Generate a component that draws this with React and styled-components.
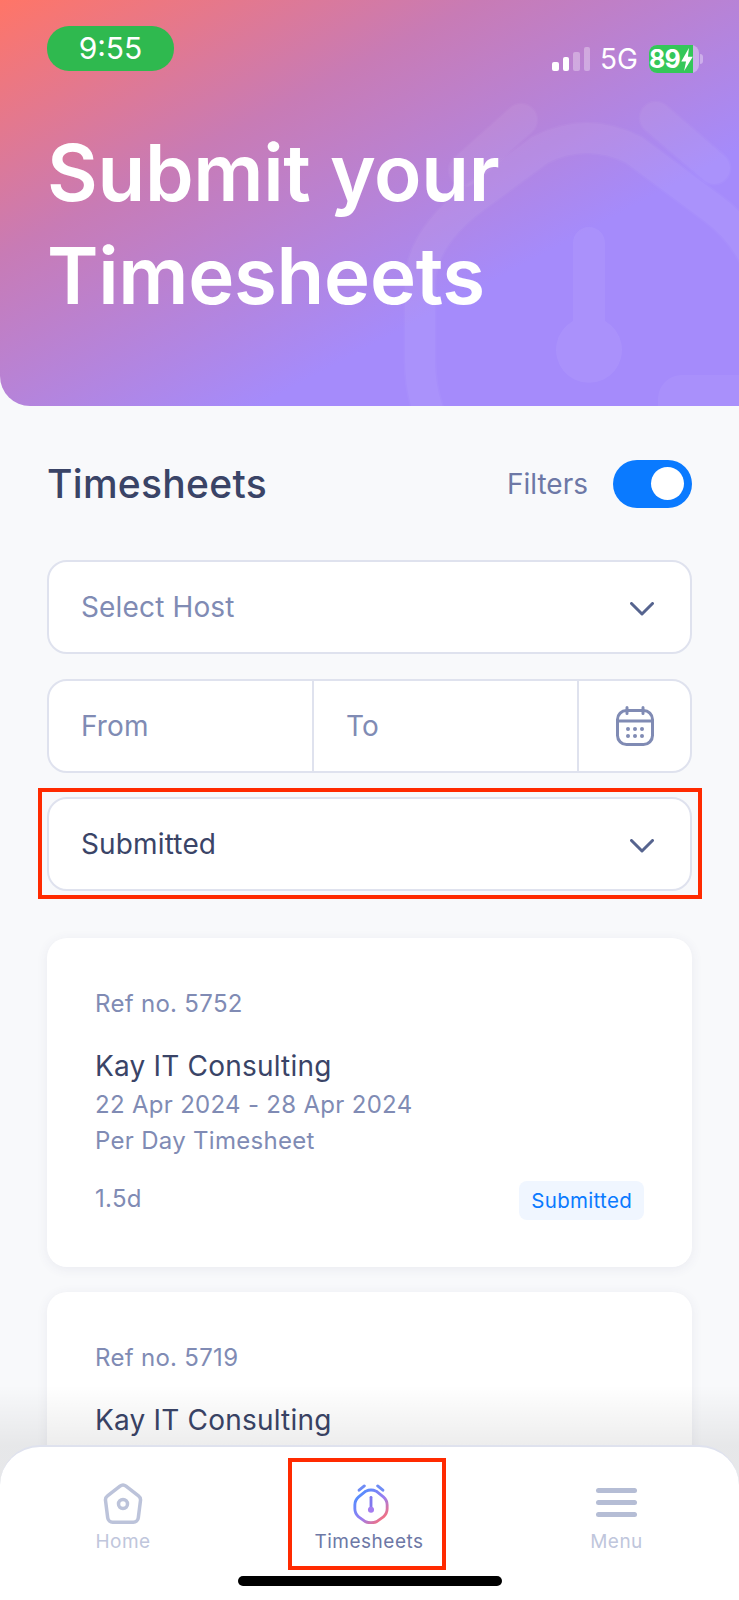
import React from "react";
import styled, { createGlobalStyle, css } from "styled-components";

const colors = {
  ink: "#3a4467",
  muted: "#808bb4",
  line: "#dfe2ee",
  blue: "#0a7aff",
  red: "#ff2a00",
  faded: "#c0c6dc",
};

const GlobalStyle = createGlobalStyle`
  html, body {
    margin: 0;
    padding: 0;
    background: #f8f9fb;
    font-family: Inter, "Liberation Sans", sans-serif;
  }
  * {
    box-sizing: border-box;
  }
`;

const Chevron = () => (
  <ChevronSvg viewBox="0 0 24 14" width="24" height="14" fill="none">
    <path d="M1.5 1.5 12 12 22.5 1.5" stroke="#56648f" strokeWidth="3" strokeLinecap="round" strokeLinejoin="round" />
  </ChevronSvg>
);

const CalendarIcon = () => (
  <svg viewBox="0 0 38 40" width="38" height="40" fill="none" stroke={colors.muted} strokeWidth="3" strokeLinecap="round">
    <rect x="1.5" y="4.5" width="35" height="34" rx="9" />
    <path d="M1.5 15h35M11 1.5v6M27 1.5v6" />
    <g fill={colors.muted} stroke="none">
      <circle cx="12" cy="23" r="2" />
      <circle cx="19" cy="23" r="2" />
      <circle cx="26" cy="23" r="2" />
      <circle cx="12" cy="30" r="2" />
      <circle cx="19" cy="30" r="2" />
      <circle cx="26" cy="30" r="2" />
    </g>
  </svg>
);

const bandPath =
  "M434 425Q420 395 420 360V285C420 250 442 222 476 197L540 150Q587 126 634 150L712 208C745 232 760 262 770 300";

const HeaderArt = () => (
  <ArtSvg viewBox="0 0 739 406" fill="none">
    <g stroke="#fff" strokeLinecap="round">
      <path d={bandPath} strokeOpacity="0.03" strokeWidth="33" strokeLinecap="butt" />
      <path d={bandPath} strokeOpacity="0.04" strokeWidth="30" strokeLinecap="butt" />
      <path d="M521 120 465 170M656 118 714 168" strokeOpacity="0.03" strokeWidth="35" />
      <path d="M521 120 465 170M656 118 714 168" strokeOpacity="0.035" strokeWidth="32" />
    </g>
    <path
      d="M573 243a16 16 0 0 1 32 0v78a33 33 0 1 1-32 0z"
      fill="#fff"
      fillOpacity="0.06"
    />
    <rect x="658" y="375" width="120" height="60" rx="24" fill="#fff" fillOpacity="0.05" />
  </ArtSvg>
);

const HomeIcon = () => (
  <svg viewBox="0 0 40 42" width="40" height="42" fill="none" stroke="#bcc3da" strokeWidth="3.5" strokeLinejoin="round">
    <path d="M17 3.2a5 5 0 0 1 6 0l12.5 9.6a5 5 0 0 1 2 4.6l-2.2 17.4a5 5 0 0 1-5 4.4H9.7a5 5 0 0 1-5-4.4L2.5 17.4a5 5 0 0 1 2-4.6z" />
    <circle cx="20" cy="21" r="4.5" />
  </svg>
);

const TimerIcon = () => (
  <TimerSvg viewBox="0 0 40 42" width="38" height="40" fill="none" strokeLinecap="round" strokeLinejoin="round">
    <defs>
      <linearGradient id="timerStroke" x1="0.1" y1="0.1" x2="0.9" y2="0.95">
        <stop offset="0" stopColor="#4f8dff" />
        <stop offset="0.55" stopColor="#9a7df0" />
        <stop offset="1" stopColor="#ff6f72" />
      </linearGradient>
    </defs>
    <path
      d="M14.5 7.5Q20 5 25.5 7.5L33 13.5Q37 17 37 22v4Q37 31 33 34.5L26 39.5Q20 42 14 39.5L7 34.5Q3 31 3 26v-4Q3 17 7 13.5z"
      stroke="url(#timerStroke)"
      strokeWidth="3"
    />
    <path d="M7.5 6.5 13 2M32.5 6.5 27 2" stroke="#6f8cf5" strokeWidth="3" />
    <path d="M20 14v12" stroke="#7f78ee" strokeWidth="3" />
    <circle cx="20" cy="27" r="3.2" fill="#a47cf0" />
  </TimerSvg>
);

const MenuIcon = () => (
  <MenuBars>
    <span />
    <span />
    <span />
  </MenuBars>
);

// the second card runs under the bottom nav, so only its top is known
const timesheets = [
  {
    ref: "Ref no. 5752",
    host: "Kay IT Consulting",
    period: "22 Apr 2024 - 28 Apr 2024",
    type: "Per Day Timesheet",
    amount: "1.5d",
    status: "Submitted",
  },
  {
    ref: "Ref no. 5719",
    host: "Kay IT Consulting",
  },
];

const App = () => {
  return (
    <Page>
      <GlobalStyle />
      <Hero>
        <HeaderArt />
        <StatusBar>
          <TimePill>9:55</TimePill>
          <StatusRight>
            <Signal>
              <SignalBar $h={9} $on />
              <SignalBar $h={14} $on />
              <SignalBar $h={19} />
              <SignalBar $h={24} />
            </Signal>
            <Network>5G</Network>
            <Battery>
              <BatteryFill>
                89
                <svg viewBox="0 0 12 24" width="12" height="23">
                  <path d="M8 0 0 14h5l-2 10 9-15H7z" fill="#fff" />
                </svg>
              </BatteryFill>
            </Battery>
          </StatusRight>
        </StatusBar>
        <HeroTitle>
          Submit your
          <br />
          Timesheets
        </HeroTitle>
      </Hero>

      <Content>
        <TitleRow>
          <SectionTitle>Timesheets</SectionTitle>
          <FilterToggle>
            <FilterLabel>Filters</FilterLabel>
            <Toggle>
              <Knob />
            </Toggle>
          </FilterToggle>
        </TitleRow>

        <Fields>
          <Field>
            <Placeholder>Select Host</Placeholder>
            <Chevron />
          </Field>
          <DateField>
            <DateCell>From</DateCell>
            <DateCell>To</DateCell>
            <IconCell>
              <CalendarIcon />
            </IconCell>
          </DateField>
          <Field $marked>
            <Value>Submitted</Value>
            <Chevron />
          </Field>
        </Fields>

        <CardList>
          {timesheets.map((item) => (
            <Card key={item.ref}>
              <RefNo>{item.ref}</RefNo>
              <Host>{item.host}</Host>
              {item.period && <Meta>{item.period}</Meta>}
              {item.type && <Meta>{item.type}</Meta>}
              {item.status && (
                <CardFooter>
                  <Amount>{item.amount}</Amount>
                  <Badge>{item.status}</Badge>
                </CardFooter>
              )}
            </Card>
          ))}
        </CardList>
      </Content>

      <Fade />
      <BottomNav>
        <Tabs>
          <Tab>
            <TabIcon>
              <HomeIcon />
            </TabIcon>
            <TabLabel>Home</TabLabel>
          </Tab>
          <Tab $marked>
            <TabIcon>
              <TimerIcon />
            </TabIcon>
            <TabLabel $active>Timesheets</TabLabel>
          </Tab>
          <Tab>
            <TabIcon>
              <MenuIcon />
            </TabIcon>
            <TabLabel>Menu</TabLabel>
          </Tab>
        </Tabs>
        <HomeIndicator />
      </BottomNav>
    </Page>
  );
};

const Page = styled.div`
  position: relative;
  width: 739px;
  height: 1600px;
  overflow: hidden;
  background: #f8f9fb;
`;

const Hero = styled.header`
  position: relative;
  height: 406px;
  padding: 26px 0 0 47px;
  overflow: hidden;
  border-radius: 0 0 0 30px;
  background: linear-gradient(152deg, #ff7567 0%, #c87bb5 32%, #a58bfb 68%, #a58bfb 100%);
`;

const ArtSvg = styled.svg`
  position: absolute;
  top: 0;
  left: 0;
  width: 739px;
  height: 406px;
`;

const StatusBar = styled.div`
  position: relative;
  display: flex;
  justify-content: space-between;
  align-items: flex-start;
  padding-right: 40px;
`;

const TimePill = styled.div`
  width: 127px;
  height: 45px;
  border-radius: 22px;
  background: #2fb94f;
  color: #fff;
  font-size: 30px;
  line-height: 45px;
  text-align: center;
`;

const StatusRight = styled.div`
  display: flex;
  align-items: flex-end;
  margin-top: 19px;
`;

const Signal = styled.div`
  display: flex;
  align-items: flex-end;
  gap: 4px;
  height: 25px;
  margin-bottom: 2px;
`;

const SignalBar = styled.span`
  width: 6.5px;
  height: ${(p) => p.$h}px;
  border-radius: 2px;
  background: ${(p) => (p.$on ? "#fff" : "rgba(255, 255, 255, 0.32)")};
`;

const Network = styled.span`
  margin: 0 11px 0 10px;
  color: #fff;
  font-size: 28px;
  line-height: 27px;
`;

const Battery = styled.div`
  position: relative;
  width: 50px;
  height: 28px;
  border-radius: 8px;
  background: rgba(255, 255, 255, 0.35);

  &::after {
    content: "";
    position: absolute;
    top: 9px;
    right: -4px;
    width: 3px;
    height: 10px;
    border-radius: 0 3px 3px 0;
    background: rgba(255, 255, 255, 0.35);
  }
`;

const BatteryFill = styled.div`
  display: flex;
  align-items: center;
  justify-content: center;
  gap: 1px;
  width: 44px;
  height: 28px;
  border-radius: 8px 0 0 8px;
  background: #34c759;
  color: #fff;
  font-size: 25px;
  font-weight: 700;
  letter-spacing: -0.8px;
  white-space: nowrap;
`;

const HeroTitle = styled.h1`
  position: relative;
  margin: 48px 0 0 0;
  color: #fff;
  font-size: 78px;
  font-weight: 600;
  line-height: 103px;
  letter-spacing: -0.3px;
`;

const Content = styled.main`
  padding: 0 47px;
`;

const TitleRow = styled.div`
  display: flex;
  justify-content: space-between;
  align-items: center;
  height: 49px;
  margin-top: 53px;
`;

const SectionTitle = styled.h2`
  margin: 0;
  color: ${colors.ink};
  font-size: 39px;
  font-weight: 500;
  letter-spacing: 0.3px;
`;

const FilterToggle = styled.div`
  display: flex;
  align-items: center;
  gap: 25px;
`;

const FilterLabel = styled.span`
  color: #6d78a6;
  font-size: 28px;
`;

const Toggle = styled.div`
  display: flex;
  justify-content: flex-end;
  align-items: center;
  width: 79px;
  height: 48px;
  padding-right: 8px;
  border-radius: 24px;
  background: ${colors.blue};
`;

const Knob = styled.span`
  width: 33px;
  height: 33px;
  border-radius: 50%;
  background: #fff;
`;

const Fields = styled.div`
  display: flex;
  flex-direction: column;
  gap: 24.5px;
  margin-top: 52px;
`;

const Field = styled.div`
  position: relative;
  display: flex;
  justify-content: space-between;
  align-items: center;
  height: 94px;
  padding: 0 36px 0 32px;
  border: 2px solid ${colors.line};
  border-radius: 20px;
  background: #fff;

  ${(p) =>
    p.$marked &&
    css`
      &::after {
        content: "";
        position: absolute;
        inset: -11px -12px -10px -11px;
        border: 4px solid ${colors.red};
      }
    `}
`;

const ChevronSvg = styled.svg`
  display: block;
  margin-top: 4px;
`;

const Placeholder = styled.span`
  color: ${colors.muted};
  font-size: 28px;
  letter-spacing: 0.15px;
`;

const Value = styled(Placeholder)`
  color: ${colors.ink};
`;

const DateField = styled.div`
  display: grid;
  grid-template-columns: 265px 265px 1fr;
  height: 94px;
  border: 2px solid ${colors.line};
  border-radius: 20px;
  background: #fff;
`;

const DateCell = styled.div`
  display: flex;
  align-items: center;
  padding-left: 32px;
  border-right: 2px solid ${colors.line};
  color: ${colors.muted};
  font-size: 28px;
  letter-spacing: 0.15px;
`;

const IconCell = styled.div`
  display: flex;
  justify-content: center;
  align-items: center;
`;

const CardList = styled.div`
  display: flex;
  flex-direction: column;
  gap: 25px;
  margin-top: 47px;
`;

const Card = styled.article`
  display: flex;
  flex-direction: column;
  flex: none;
  height: 329px;
  padding: 50px 48px 0 48px;
  border-radius: 20px;
  background: #fff;
  box-shadow: 0 2px 12px rgba(60, 70, 110, 0.08);
`;

const RefNo = styled.div`
  color: ${colors.muted};
  font-size: 24px;
  line-height: 32px;
  letter-spacing: 0.3px;
`;

const Host = styled.div`
  margin-top: 25px;
  color: ${colors.ink};
  font-size: 28px;
  line-height: 42px;
  letter-spacing: 0.2px;
`;

const Meta = styled.div`
  color: ${colors.muted};
  font-size: 24px;
  line-height: 36px;
  letter-spacing: 0.3px;
`;

const CardFooter = styled.div`
  display: flex;
  justify-content: space-between;
  align-items: center;
  margin-top: 18px;
`;

const Amount = styled.span`
  color: ${colors.muted};
  font-size: 24px;
  letter-spacing: 0.3px;
`;

const Badge = styled.span`
  margin-top: 4px;
  padding: 7.5px 12px;
  border-radius: 8px;
  background: #f0f6ff;
  color: ${colors.blue};
  font-size: 20.5px;
  line-height: 24px;
  letter-spacing: 0.3px;
`;

const Fade = styled.div`
  position: absolute;
  left: 0;
  right: 0;
  bottom: 115px;
  height: 100px;
  background: linear-gradient(rgba(0, 0, 0, 0), rgba(0, 0, 0, 0.07) 60%);
`;

const BottomNav = styled.nav`
  position: absolute;
  left: 0;
  right: 0;
  bottom: 0;
  display: flex;
  flex-direction: column;
  align-items: center;
  height: 155px;
  padding-top: 36px;
  border-top: 2px solid ${colors.line};
  border-radius: 40px 40px 0 0;
  background: #fff;
`;

const Tabs = styled.div`
  display: grid;
  grid-template-columns: 246px 246px 249px;
  width: 100%;
  height: 86px;
`;

const Tab = styled.div`
  position: relative;
  display: flex;
  flex-direction: column;
  align-items: center;
  gap: 5px;

  ${(p) =>
    p.$marked &&
    css`
      &::after {
        content: "";
        position: absolute;
        top: -25px;
        bottom: -1px;
        left: 42px;
        right: 46px;
        border: 4px solid ${colors.red};
      }
    `}
`;

const TabIcon = styled.div`
  display: flex;
  align-items: center;
  justify-content: center;
  height: 42px;
`;

const TimerSvg = styled.svg`
  margin-left: 4px;
`;

const TabLabel = styled.span`
  color: ${(p) => (p.$active ? "#6d78a6" : colors.faded)};
  font-size: 19px;
  line-height: 24px;
  letter-spacing: 0.5px;
`;

const MenuBars = styled.div`
  display: flex;
  flex-direction: column;
  gap: 7px;
  margin-bottom: 4px;

  span {
    display: block;
    width: 41px;
    height: 5px;
    border-radius: 3px;
    background: #b5bdd5;
  }
`;

const HomeIndicator = styled.div`
  width: 264px;
  height: 10px;
  margin-top: 7px;
  border-radius: 5px;
  background: #000;
`;

export default App;
